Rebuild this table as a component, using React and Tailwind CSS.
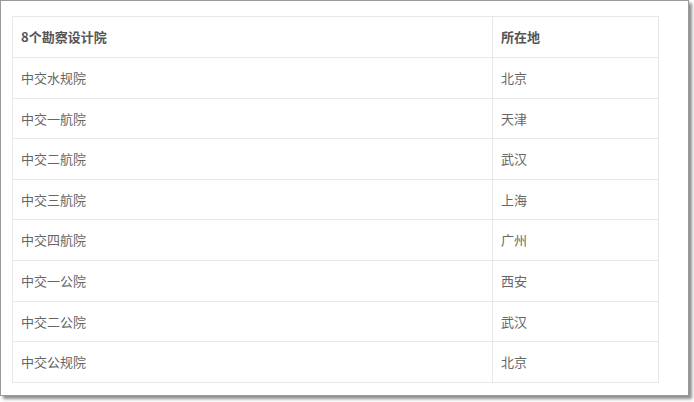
const rows = [
  ['中交水规院', '北京'],
  ['中交一航院', '天津'],
  ['中交二航院', '武汉'],
  ['中交三航院', '上海'],
  ['中交四航院', '广州'],
  ['中交一公院', '西安'],
  ['中交二公院', '武汉'],
  ['中交公规院', '北京'],
];

export default function App() {
  return (
    <div className="w-[694px] h-[402px] bg-white">
      <div className="w-[689px] h-[396px] border border-[#9a9a9a] bg-white shadow-[3px_3px_3px_rgba(0,0,0,0.45)] pl-[11px] pt-[15px] font-['Noto_Sans_CJK_SC',sans-serif] text-[13px]">
        <table className="w-[647px] border-collapse table-fixed">
          <colgroup>
            <col className="w-[480px]" />
            <col />
          </colgroup>
          <thead>
            <tr className="h-[41px]">
              <th className="border border-[#e8e8e8] pl-2 text-left font-bold text-[#555]">8个勘察设计院</th>
              <th className="border border-[#e8e8e8] pl-2 text-left font-bold text-[#555]">所在地</th>
            </tr>
          </thead>
          <tbody>
            {rows.map(([name, city], i) => (
              <tr key={i} className="h-[40.6px]">
                <td className="border border-[#e8e8e8] pl-2 text-[#666]">{name}</td>
                <td className="border border-[#e8e8e8] pl-2 text-[#666]">{city}</td>
              </tr>
            ))}
          </tbody>
        </table>
      </div>
    </div>
  );
}
